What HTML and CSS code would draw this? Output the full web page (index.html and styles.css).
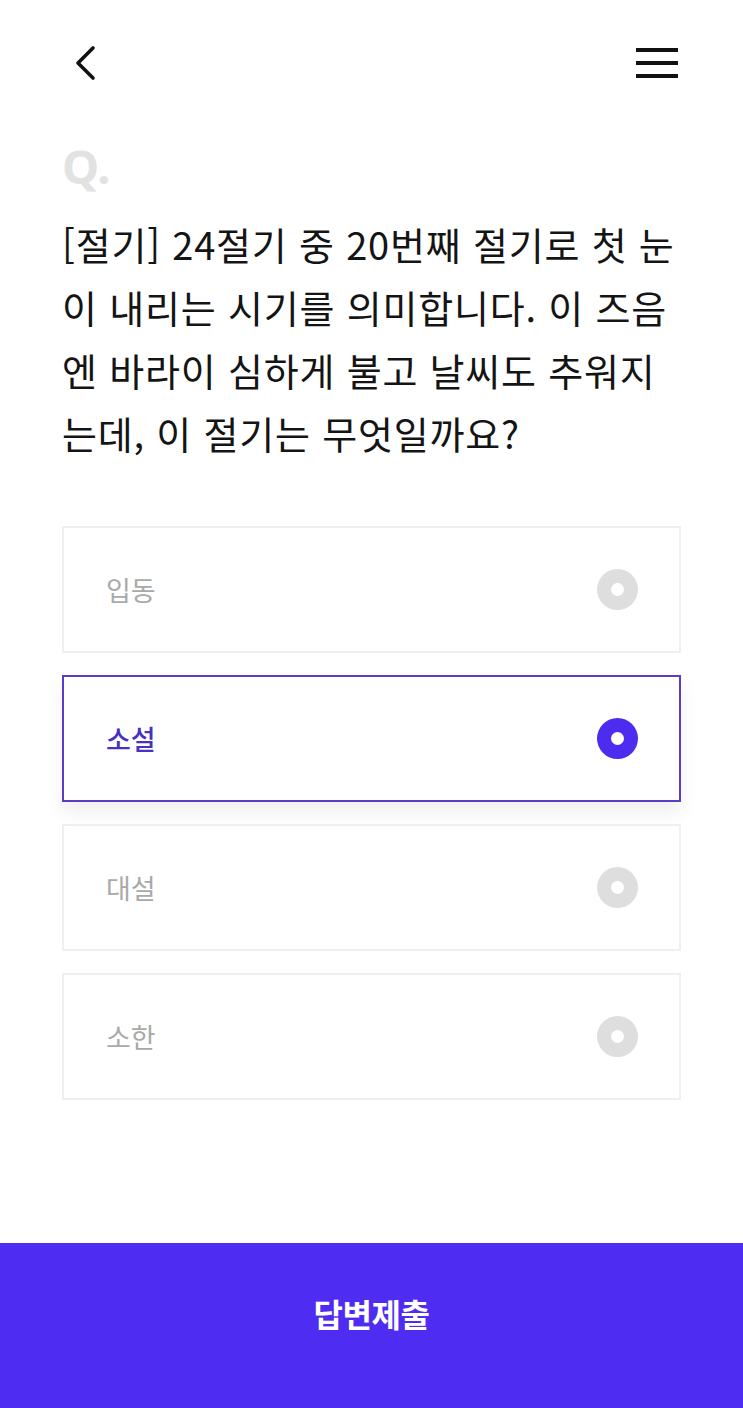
FILE: index.html
```html
<!DOCTYPE html>
<html lang="ko">
<head>
    <meta charset="UTF-8">
    <meta name="viewport" content="width=device-width, initial-scale=1.0">
    <title>퀴즈</title>
    <link rel="stylesheet" href="styles.css">
</head>
<body>
    <div class="page">
        <header class="topbar">
            <button class="icon-button back" aria-label="뒤로">
                <svg width="28" height="36" viewBox="0 0 28 36">
                    <polyline points="21,3 6,18 21,33" fill="none" stroke="#111" stroke-width="3.6" stroke-linecap="round" stroke-linejoin="round"/>
                </svg>
            </button>
            <button class="icon-button menu" aria-label="메뉴">
                <span></span>
                <span></span>
                <span></span>
            </button>
        </header>

        <main class="quiz">
            <div class="q-mark">Q.</div>
            <p class="question">[절기] 24절기 중 20번째 절기로 첫 눈<br>이 내리는 시기를 의미합니다. 이 즈음<br>엔 바라이 심하게 불고 날씨도 추워지<br>는데, 이 절기는 무엇일까요?</p>

            <ul class="options">
                <li class="option">
                    <span class="label">입동</span>
                    <span class="radio"></span>
                </li>
                <li class="option selected">
                    <span class="label">소설</span>
                    <span class="radio"></span>
                </li>
                <li class="option">
                    <span class="label">대설</span>
                    <span class="radio"></span>
                </li>
                <li class="option">
                    <span class="label">소한</span>
                    <span class="radio"></span>
                </li>
            </ul>
        </main>

        <button class="submit">답변제출</button>
    </div>
</body>
</html>
```

FILE: styles.css
```css
body {
    margin: 0;
    padding: 0;
    background-color: #fff;
    font-family: "Noto Sans CJK KR", "Noto Sans", sans-serif;
    color: #111;
}

.page {
    width: 743px;
    height: 1408px;
    display: flex;
    flex-direction: column;
    overflow: hidden;
}

.topbar {
    display: flex;
    justify-content: space-between;
    align-items: center;
    padding: 44px 65px 0 72px;
    height: 38px;
}

.icon-button {
    background: none;
    border: none;
    padding: 0;
    cursor: pointer;
}

.back {
    width: 28px;
    height: 36px;
}

.menu {
    width: 42px;
    display: flex;
    flex-direction: column;
    gap: 9.5px;
}

.menu span {
    display: block;
    height: 3.5px;
    background-color: #111;
}

.quiz {
    flex: 1;
    padding: 0 62px;
}

.q-mark {
    margin-top: 62px;
    font-family: "Noto Sans", sans-serif;
    font-size: 47px;
    font-weight: 700;
    line-height: 44px;
    color: #e2e2e2;
}

.question {
    margin: 24px 0 0;
    font-size: 38px;
    line-height: 63px;
    letter-spacing: 0.8px;
    white-space: nowrap;
    color: #141414;
}

.options {
    list-style: none;
    margin: 62px 0 0;
    padding: 0;
    display: flex;
    flex-direction: column;
    gap: 22px;
}

.option {
    height: 123px;
    border: 2px solid #efefef;
    display: flex;
    align-items: center;
    justify-content: space-between;
    padding: 0 41px 0 42px;
}

.label {
    font-size: 27px;
    color: #a9a9a9;
}

.radio {
    width: 41px;
    height: 41px;
    border-radius: 50%;
    background-color: #dedede;
    position: relative;
}

.radio::after {
    content: "";
    position: absolute;
    top: 14px;
    left: 14px;
    width: 13px;
    height: 13px;
    border-radius: 50%;
    background-color: #fff;
}

.option.selected {
    border-color: #5a3dc4;
    box-shadow: 0 10px 18px rgba(0, 0, 0, 0.07);
}

.option.selected .label {
    color: #4a2fc0;
    font-weight: 500;
}

.option.selected .radio {
    background-color: #4d2cf0;
}

.submit {
    height: 165px;
    padding: 0 0 26px;
    border: none;
    background-color: #4f2cf2;
    color: #fff;
    font-family: "Noto Sans CJK KR", sans-serif;
    font-size: 32px;
    font-weight: 700;
    letter-spacing: -0.5px;
    cursor: pointer;
}
```
